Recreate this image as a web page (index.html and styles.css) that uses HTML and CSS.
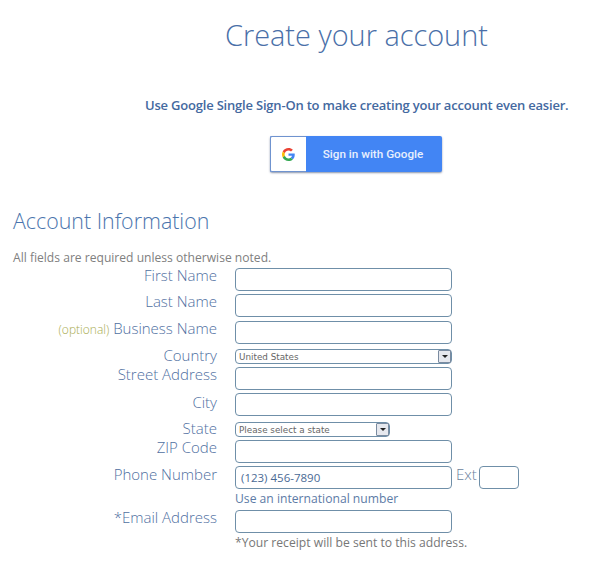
FILE: index.html
```html
<!DOCTYPE html>
<html lang="en">
<head>
<meta charset="utf-8">
<title>Create your account</title>
<link rel="stylesheet" href="styles.css">
</head>
<body>
<main class="page">
  <h1 class="title">Create your account</h1>
  <p class="sso-text">Use Google Single Sign-On to make creating your account even easier.</p>
  <div class="sso-row">
    <button class="google-btn" type="button">
      <span class="google-icon">
        <svg width="13" height="13" viewBox="0 0 48 48" aria-hidden="true">
          <path fill="#EA4335" d="M24 9.500c3.500 0 6.700 1.200 9.200 3.600l6.900-6.900C35.900 2.400 30.400 0 24 0 14.600 0 6.500 5.400 2.600 13.200l8 6.200C12.500 13.600 17.800 9.500 24 9.500z"/>
          <path fill="#4285F4" d="M47 24.500c0-1.600-.1-3.100-.4-4.500H24v9h13c-.6 3-2.200 5.500-4.800 7.200l7.700 6C44.400 37.900 47 31.800 47 24.500z"/>
          <path fill="#FBBC05" d="M10.600 28.600c-.5-1.400-.8-3-.8-4.600s.3-3.200.8-4.600l-8-6.200C.9 16.500 0 20.100 0 24s.9 7.500 2.600 10.800l8-6.200z"/>
          <path fill="#34A853" d="M24 48c6.500 0 11.900-2.100 15.900-5.800l-7.700-6c-2.200 1.400-4.900 2.300-8.200 2.300-6.200 0-11.500-4.100-13.400-9.900l-8 6.200C6.500 42.600 14.600 48 24 48z"/>
        </svg>
      </span>
      <span class="google-label">Sign in with Google</span>
    </button>
  </div>

  <h2 class="section-title">Account Information</h2>
  <p class="note">All fields are required unless otherwise noted.</p>

  <form class="form">
    <div class="row row-first"><label class="label">First Name</label><input class="input" type="text"></div>
    <div class="row"><label class="label">Last Name</label><input class="input" type="text"></div>
    <div class="row row-business"><label class="label"><span class="optional">(optional)</span> Business Name</label><input class="input" type="text"></div>
    <div class="row row-country"><label class="label label-tight">Country</label>
      <span class="select-wrap select-wide"><select class="select"><option>United States</option></select><span class="select-arrow"></span></span></div>
    <div class="row"><label class="label">Street Address</label><input class="input" type="text"></div>
    <div class="row"><label class="label label-low">City</label><input class="input" type="text"></div>
    <div class="row row-state"><label class="label label-tight">State</label>
      <span class="select-wrap select-narrow"><select class="select"><option>Please select a state</option></select><span class="select-arrow"></span></span></div>
    <div class="row"><label class="label">ZIP Code</label><input class="input" type="text"></div>
    <div class="row"><label class="label label-phone">Phone Number</label><input class="input input-phone" type="text" value="(123) 456-7890"><span class="ext">Ext</span><input class="input input-ext" type="text"></div>
    <div class="row row-help"><span class="label"></span><a class="help-link">Use an international number</a></div>
    <div class="row"><label class="label">*Email Address</label><input class="input" type="text"></div>
    <div class="row row-help"><span class="label"></span><span class="help-note">*Your receipt will be sent to this address.</span></div>
  </form>
</main>
</body>
</html>
```
FILE: styles.css
```css
* { box-sizing: border-box; }
html, body { margin: 0; padding: 0; background: #fff; }
body { font-family: "Open Sans", "Liberation Sans", sans-serif; height: 561px; overflow: hidden; }
.page { width: 600px; padding: 0 0 0 13px; }
.title {
  margin: 0;
  padding: 14px 0 0 212px;
  font-size: 28.900px;
  line-height: 42px;
  font-weight: 300;
  color: #4a6fa8;
  white-space: nowrap;
}
.sso-text {
  margin: 0;
  padding: 39px 0 0 132px;
  font-size: 13px;
  line-height: 20px;
  font-weight: 600;
  color: #44699f;
  white-space: nowrap;
  letter-spacing: -0.2px;
}
.sso-row { padding: 21px 0 0 257px; height: 57px; }
.google-btn {
  display: flex;
  width: 172px;
  height: 36px;
  padding: 0;
  border: 0;
  border-radius: 2px;
  background: #4285f4;
  box-shadow: 0 1px 2px rgba(40, 60, 100, .55);
  font-family: Roboto, sans-serif;
}
.google-icon {
  display: flex;
  align-items: center;
  justify-content: center;
  width: 36px;
  height: 36px;
  background: #fff;
  border: 1px solid #6f93cf;
  border-right: 0;
  border-radius: 2px 0 0 2px;
}
.google-label {
  flex: 1;
  padding-right: 2px;
  font-size: 11.700px;
  font-weight: 500;
  line-height: 36px;
  color: #e8f0fd;
  text-align: center;
}
.section-title {
  margin: 0;
  padding-top: 34px;
  font-size: 21.400px;
  line-height: 30px;
  font-weight: 300;
  color: #4a74ad;
  white-space: nowrap;
}
.note {
  margin: 0;
  padding-top: 13px;
  font-size: 12.100px;
  line-height: 17px;
  color: #808080;
  font-weight: 400;
  white-space: nowrap;
}
.form { display: flex; flex-direction: column; }
.row { display: flex; margin-top: 3px; }
.row-first { margin-top: 2px; }
.row-business { margin-top: 4px; }
.row-country { margin-top: 5px; }
.row-state { margin-top: 6px; }
.row-help { margin-top: 1px; }
.label {
  flex: none;
  width: 204px;
  margin-right: 18px;
  font-size: 15px;
  line-height: 14px;
  font-weight: 300;
  color: #4f6f9f;
  text-align: right;
  white-space: nowrap;
}
.label-tight { line-height: 12px; }
.label-low { padding-top: 2px; }
.label-phone { padding-top: 1px; }
.optional { font-size: 12px; color: #a8ab4e; }
.input {
  display: block;
  width: 217px;
  height: 23px;
  padding: 0 5px;
  border: 1px solid #6f8fa8;
  border-radius: 4px;
  background: #fff;
  font-family: "Open Sans", sans-serif;
  font-size: 11.500px;
  color: #4a6a95;
  outline: 0;
}
.ext {
  width: 27px;
  padding-left: 4px;
  font-size: 15px;
  line-height: 17px;
  font-weight: 300;
  color: #6a7f9c;
}
.input-ext { width: 40px; }
.select-wrap { position: relative; display: block; height: 15px; }
.select-wide { width: 217px; }
.select-narrow { width: 155px; }
.select {
  display: block;
  width: 100%;
  height: 15px;
  padding: 2px 0 0 3px;
  border: 1px solid #6f8fa8;
  border-radius: 4px;
  background: #fff;
  appearance: none;
  font-family: "DejaVu Sans", sans-serif;
  font-size: 8.800px;
  line-height: 11px;
  color: #666;
  outline: 0;
}
.select-arrow {
  position: absolute;
  top: 1px;
  right: 1px;
  width: 13px;
  height: 13px;
  border: 1px solid #7a8ba0;
  border-radius: 1px;
  background: #e6e8ee;
}
.select-arrow::after {
  content: "";
  position: absolute;
  top: 4px;
  left: 3px;
  border: 3px solid transparent;
  border-top: 3px solid #222;
  border-bottom: 0;
}
.help-link {
  font-size: 12.150px;
  line-height: 17px;
  color: #5d7ba6;
  white-space: nowrap;
}
.help-note {
  font-size: 12.150px;
  line-height: 17px;
  color: #777;
  white-space: nowrap;
}
```
